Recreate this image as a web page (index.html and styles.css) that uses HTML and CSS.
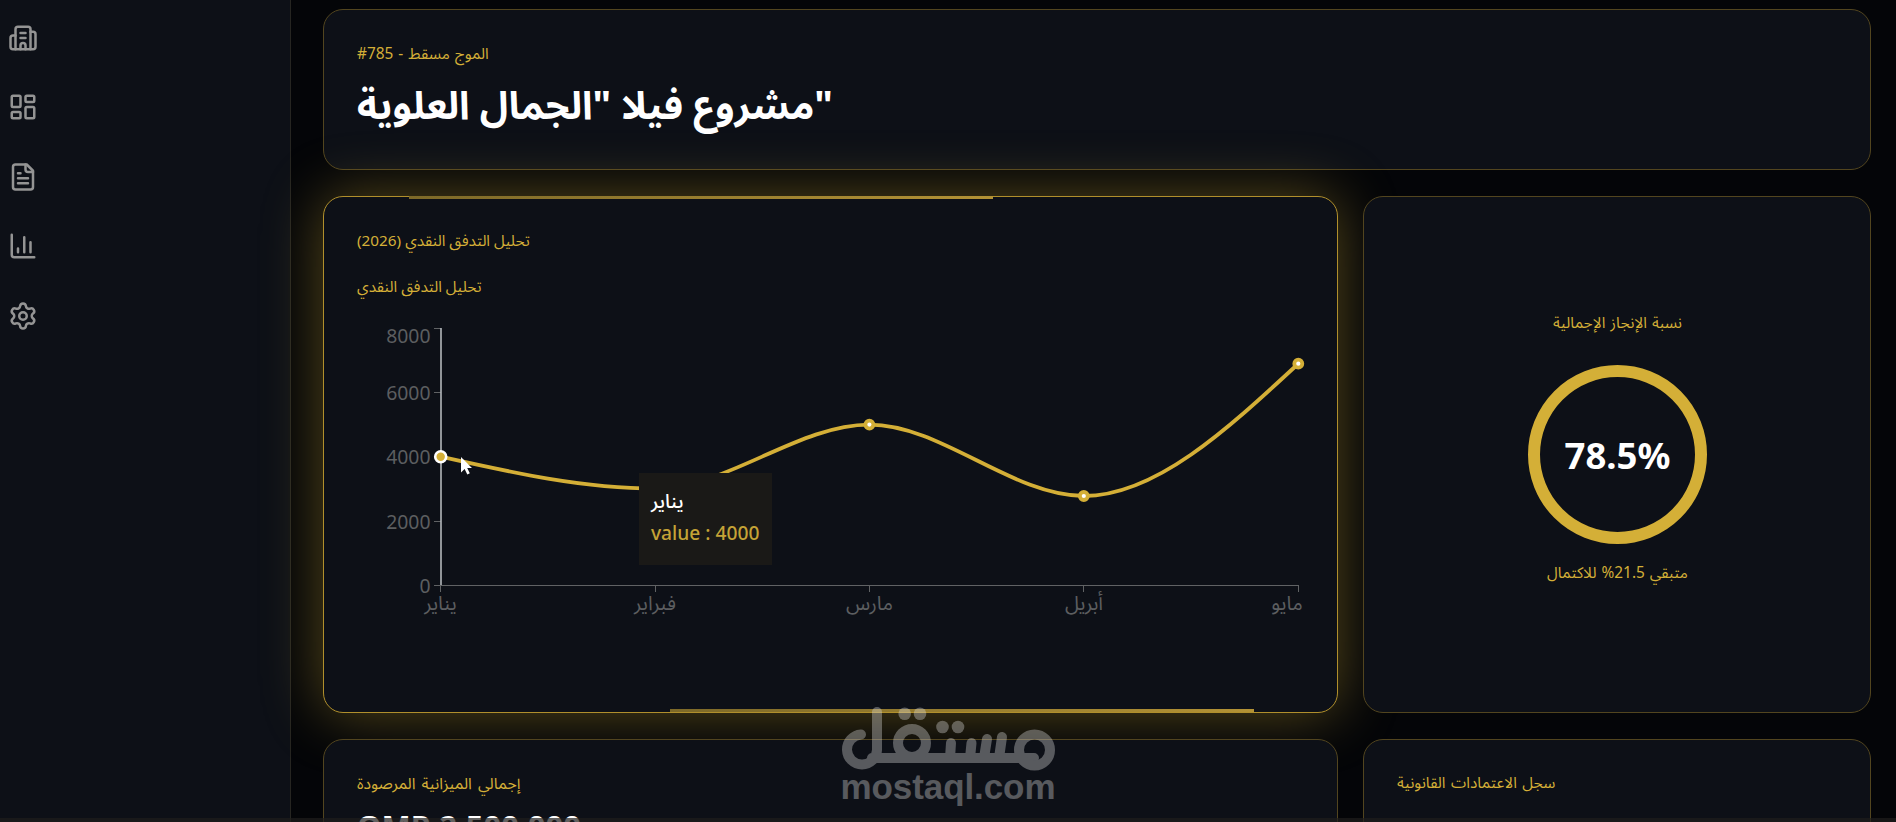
FILE: index.html
```html
<!DOCTYPE html>
<html lang="en">
<head>
    <meta charset="UTF-8">
    <meta name="viewport" content="width=device-width, initial-scale=1.0">
    <title>Project Dashboard</title>
    <link rel="stylesheet" href="styles.css">
</head>
<body>
    <div class="layout">
        <!-- Sidebar -->
        <nav class="sidebar">
            <svg class="icon" viewBox="0 0 24 24"><path d="M10 12h4M10 8h4M14 21v-3a2 2 0 0 0-4 0v3"/><path d="M6 10H4a2 2 0 0 0-2 2v7a2 2 0 0 0 2 2h16a2 2 0 0 0 2-2V9a2 2 0 0 0-2-2h-2"/><path d="M6 21V5a2 2 0 0 1 2-2h8a2 2 0 0 1 2 2v16"/></svg>
            <svg class="icon" viewBox="0 0 24 24"><rect width="7" height="9" x="3" y="3" rx="1"/><rect width="7" height="5" x="14" y="3" rx="1"/><rect width="7" height="9" x="14" y="12" rx="1"/><rect width="7" height="5" x="3" y="16" rx="1"/></svg>
            <svg class="icon" viewBox="0 0 24 24"><path d="M15 2H6a2 2 0 0 0-2 2v16a2 2 0 0 0 2 2h12a2 2 0 0 0 2-2V7Z"/><path d="M14 2v4a2 2 0 0 0 2 2h4M10 9H8M16 13H8M16 17H8"/></svg>
            <svg class="icon" viewBox="0 0 24 24"><path d="M3 3v16a2 2 0 0 0 2 2h16M18 17V9M13 17V5M8 17v-3"/></svg>
            <svg class="icon" viewBox="0 0 24 24"><path d="M9.671 4.136a2.34 2.34 0 0 1 4.659 0 2.34 2.34 0 0 0 3.319 1.915 2.34 2.34 0 0 1 2.33 4.033 2.34 2.34 0 0 0 0 3.831 2.34 2.34 0 0 1-2.33 4.033 2.34 2.34 0 0 0-3.319 1.915 2.34 2.34 0 0 1-4.659 0 2.34 2.34 0 0 0-3.32-1.915 2.34 2.34 0 0 1-2.33-4.033 2.34 2.34 0 0 0 0-3.831A2.34 2.34 0 0 1 6.35 6.051a2.34 2.34 0 0 0 3.319-1.915"/><circle cx="12" cy="12" r="3"/></svg>
        </nav>

        <main class="content">
            <section class="card header">
                <p class="label">#785 - الموج مسقط</p>
                <h1 class="title">مشروع فيلا "الجمال العلوية"</h1>
            </section>

            <!-- Cash flow chart -->
            <section class="card active">
                <p class="label">تحليل التدفق النقدي (2026)</p>
                <p class="label">تحليل التدفق النقدي</p>
                <svg class="chart" width="980" height="310" viewBox="340 318 980 310">
                    <g class="axis">
                        <path d="M441 585.5H1298.5M434 328.5h7M434 392.5h7M434 456.5h7M434 521.5h7M434 585.5h7"/>
                        <path d="M440.5 585v7M655.5 585v7M869.5 585v7M1083.5 585v7M1298.5 585v7"/>
                    </g>
                    <g class="tick tick-y">
                        <text x="430.500" y="343">8000</text>
                        <text x="430.500" y="400">6000</text>
                        <text x="430.500" y="464">4000</text>
                        <text x="430.500" y="528.500">2000</text>
                        <text x="430.500" y="592.500">0</text>
                    </g>
                    <g class="tick tick-x">
                        <text x="440.500" y="610">يناير</text>
                        <text x="655" y="610">فبراير</text>
                        <text x="869.500" y="610">مارس</text>
                        <text x="1084" y="610">أبريل</text>
                        <text x="1287" y="610">مايو</text>
                    </g>
                    <path class="cursor-line" d="M441 328V585"/>
                    <path class="curve" d="M440.700 456.700C512.200 472.700 583.600 488.600 655 488.600S797.900 424.600 869.400 424.600S1012.300 496 1083.800 496S1226.800 429.800 1298.300 363.700"/>
                    <g class="dots">
                        <circle cx="869.400" cy="424.600" r="4"/>
                        <circle cx="1083.800" cy="496" r="4"/>
                        <circle cx="1298.300" cy="363.700" r="4"/>
                    </g>
                    <circle class="dot-active" cx="440.700" cy="456.700" r="5.500"/>
                    <path class="pointer" d="M461 457v15.500l3.600-3.400 2.700 5.400 2.500-1.200-2.600-5.200h4.800z"/>
                </svg>
                <div class="tooltip">
                    <p class="tooltip-name">يناير</p>
                    <p class="tooltip-value">value : 4000</p>
                </div>
            </section>

            <!-- Progress -->
            <section class="card progress">
                <p class="label">نسبة الإنجاز الإجمالية</p>
                <div class="ring"><span>78.5%</span></div>
                <p class="label">متبقي 21.5% للاكتمال</p>
            </section>

            <section class="card budget">
                <p class="label">إجمالي الميزانية المرصودة</p>
                <h2 class="amount">OMR 2,500,000</h2>
            </section>

            <section class="card credits">
                <p class="label">سجل الاعتمادات القانونية</p>
            </section>
        </main>
    </div>

    <!-- Watermark -->
    <svg class="watermark" width="220" height="102" viewBox="838 704 220 102">
        <g class="mark">
            <path d="M861 734.500A15 15 0 1 0 877 750V712M872 758H1034"/>
            <circle cx="912" cy="743" r="14"/>
            <circle cx="1034.500" cy="750" r="15.500"/>
            <path d="M950 758l1-15M970 758l1.500-15M984 758l3-19M999 758l3-21"/>
        </g>
        <g class="mark-dots">
            <circle cx="904.700" cy="713.700" r="6.300"/><circle cx="920" cy="713.700" r="6.300"/>
            <circle cx="942.500" cy="727" r="6.300"/><circle cx="958" cy="727" r="6.300"/>
        </g>
        <text x="840.500" y="798.500" textLength="215">mostaql.com</text>
    </svg>
    <div class="bottom-bar"></div>
</body>
</html>
```
FILE: styles.css
```css
* {
    box-sizing: border-box;
    margin: 0;
    padding: 0;
}

body {
    height: 822px;
    overflow: hidden;
    background-color: #040508;
    font-family: "Noto Sans", "Noto Sans Arabic", "DejaVu Sans", sans-serif;
    color: #ffffff;
}

.layout {
    display: flex;
    height: 822px;
    overflow: hidden;
}

.sidebar {
    flex: 0 0 291px;
    display: flex;
    flex-direction: column;
    gap: 39.500px;
    padding: 22.500px 7.500px;
    background-color: #0d1017;
    border-right: 1px solid #262521;
}

.icon {
    width: 30px;
    height: 30px;
    fill: none;
    stroke: #949494;
    stroke-width: 2;
    stroke-linecap: round;
    stroke-linejoin: round;
}

.content {
    flex: 1;
    display: grid;
    grid-template-columns: 1015px 508px;
    grid-template-rows: 161px 517px 180px;
    gap: 26px 25px;
    padding: 9px 25px 0 32px;
}

.card {
    padding: 32px 33px;
    background-color: #0d1017;
    border: 1px solid #52451f;
    border-radius: 20px;
}

.label {
    font-size: 15.4px;
    line-height: 22px;
    color: #d4af37;
    white-space: nowrap;
}

.header {
    grid-column: 1 / 3;
    padding-top: 33px;
}

.header .label {
    word-spacing: 1px;
}

.title {
    margin-top: 11px;
    font-size: 38.8px;
    line-height: 56px;
    white-space: nowrap;
}

.active {
    position: relative;
    border-color: #b08f2c;
    box-shadow: 0 0 60px rgba(212, 175, 55, 0.4);
}

/* keep the glow behind the neighbouring cards */
.progress,
.budget,
.credits {
    position: relative;
}

.active .label {
    font-size: 15.3px;
}

.active .label + .label {
    margin-top: 24px;
}

.active::before,
.active::after {
    content: "";
    position: absolute;
    width: 584px;
    height: 3px;
}

.active::before {
    top: -1px;
    left: 85px;
    background: linear-gradient(90deg, #7d6928, #b39235);
}

.active::after {
    bottom: 0;
    left: 346px;
    background: linear-gradient(90deg, #7d6928, #b39235);
}

.chart {
    display: block;
    margin: 21px 0 0 -17px;
}

.axis path {
    fill: none;
    stroke: #606264;
}

.tick {
    font-size: 20px;
    fill: #5c5e60;
}

.tick-y {
    font-size: 19.4px;
    text-anchor: end;
}

.tick-x {
    text-anchor: middle;
}

.cursor-line {
    stroke: #b4b8bc;
    stroke-width: 1.6;
}

.curve {
    fill: none;
    stroke: #d4af37;
    stroke-width: 3.8;
}

.dots circle {
    fill: #ffffff;
    stroke: #d4af37;
    stroke-width: 3.8;
}

.dot-active {
    fill: #d4af37;
    stroke: #ffffff;
    stroke-width: 2.6;
}

.pointer {
    fill: #ffffff;
}

.tooltip {
    position: absolute;
    top: 276px;
    left: 315px;
    width: 133px;
    height: 92px;
    padding: 12px;
    background-color: #1a1917;
    font-size: 19.2px;
    font-weight: 500;
    line-height: 32px;
    white-space: nowrap;
}

.tooltip-value {
    color: #c5a336;
}

.progress {
    display: flex;
    flex-direction: column;
    align-items: center;
    justify-content: center;
    gap: 18px;
    padding: 20px 32px 33px 33px;
}

.progress .label {
    word-spacing: 1px;
}

.ring {
    display: flex;
    align-items: center;
    justify-content: center;
    width: 179px;
    height: 179px;
    margin-top: 13px;
    border: 12px solid #d4af37;
    border-radius: 50%;
    font-size: 36.5px;
    font-weight: bold;
}

.budget .label {
    font-size: 15.8px;
    word-spacing: 2px;
}

.credits .label {
    word-spacing: 1.5px;
}

.amount {
    margin-top: 8px;
    font-size: 31px;
    line-height: 48px;
}

.watermark {
    position: absolute;
    top: 704px;
    left: 838px;
    opacity: 0.36;
}

.mark {
    fill: none;
    stroke: #dcdcdc;
    stroke-width: 10;
    stroke-linecap: round;
}

.mark-dots {
    fill: #dcdcdc;
}

.watermark text {
    font-family: "Liberation Sans", sans-serif;
    font-size: 35px;
    font-weight: bold;
    fill: #dcdcdc;
}

.bottom-bar {
    position: absolute;
    top: 818px;
    left: 0;
    width: 100%;
    height: 4px;
    background-color: rgba(32, 30, 28, 0.7);
}
```
